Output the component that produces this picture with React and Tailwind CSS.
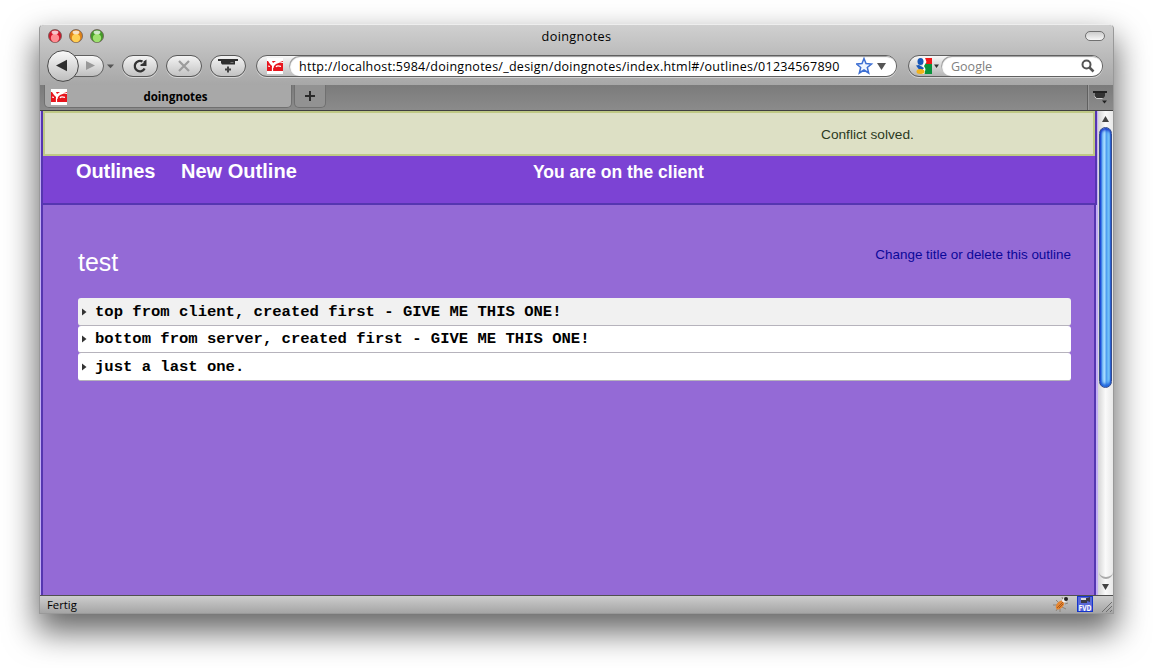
import React from "react";

function Ball({ x, c, d }) {
  return (
    <g>
      <circle cx={x} cy="7" r="6.5" fill={d} stroke="#6b5a55" strokeWidth=".8" />
      <circle cx={x} cy="9" r="4.2" fill={c} />
      <ellipse cx={x} cy="3.4" rx="3.4" ry="1.8" fill="#fff" opacity=".75" />
    </g>
  );
}

function Favicon() {
  return (
    <svg width="16" height="16" viewBox="0 0 16 16" className="shrink-0">
      <rect width="16" height="16" fill="#fff" />
      <rect y="3" width="16" height="10" fill="#e8141c" />
      <path d="M1 3h4l1 2 3-2h4l3 1v1l-3-.5-4 1.500-2 2-.5 2H5V8L3 6z" fill="#fff" />
      <path d="M9 9c1-2 3.500-1 5-.500M5.500 9v4M1 8l2 .500" fill="none" stroke="#fff" strokeWidth="1.200" />
    </svg>
  );
}

const pill =
  "flex h-[22px] w-9 items-center justify-center rounded-full border border-[#585858] bg-gradient-to-b from-[#f4f4f4] to-[#c3c3c3] shadow-[0_1px_0_#d5d5d5]";

function Toolbar() {
  return (
    <div className="flex h-[41px] items-start">
      <div className="mt-[5px] ml-[7px] h-8 w-[68px]">
        <svg width="72" height="33" viewBox="0 0 72 33">
          <defs>
            <linearGradient id="btn" x1="0" y1="0" x2="0" y2="1">
              <stop offset="0" stopColor="#fafafa" />
              <stop offset="1" stopColor="#bdbdbd" />
            </linearGradient>
          </defs>
          <path d="M20 5.500H46a10.500 10.500 0 0 1 0 21H20z" fill="url(#btn)" stroke="#606060" />
          <circle cx="16" cy="16" r="15.400" fill="url(#btn)" stroke="#484848" />
          <path d="M9 15.500L20 9.700V21.300z" fill="#2f2f2f" />
          <path d="M39 11L48 15.500 39 20z" fill="#999" />
          <path d="M60 14.500h7L63.500 18.300z" fill="#555" />
        </svg>
      </div>
      <div className="mt-[10px] ml-[7px] flex gap-2">
        <div className={pill}>
          <svg width="16" height="16" viewBox="0 0 16 16">
            <path d="M12.600 10.500A5.200 5.200 0 1 1 10.500 3.600" fill="none" stroke="#333" strokeWidth="2.300" />
            <path d="M14.500 1.500V8H8.500V6.500L11.500 5V3.500z" fill="#333" />
          </svg>
        </div>
        <div className={pill}>
          <svg width="12" height="12" viewBox="0 0 12 12">
            <path d="M1 1L11 11M11 1L1 11" stroke="#9c9c9c" strokeWidth="2.200" />
          </svg>
        </div>
        <div className={pill}>
          <svg width="20" height="16" viewBox="0 0 20 16">
            <path d="M0 1h20v2h-3v3.500H4L3 5V3H0z" fill="#2f2f2f" />
            <path d="M10 8.500v6M7 11.500h6" stroke="#444" strokeWidth="2" />
            <path d="M12.500 4.500h3" stroke="#888" strokeWidth=".8" />
          </svg>
        </div>
      </div>
      <div className="mt-[10px] ml-[10px] flex h-[22px] w-[641px] items-center rounded-full border border-[#606060] bg-gradient-to-b from-[#f8f8f8] to-[#bdbdbd] pl-[10px] shadow-[0_1px_0_#d5d5d5]">
        <Favicon />
        <div className="ml-[6px] flex h-5 flex-1 items-center rounded-full bg-white pl-[10px] shadow-[inset_1px_1px_1px_#999]">
          <span className="w-[557px] pt-[2px] font-['Open_Sans',sans-serif] text-[12.5px] leading-[18px] tracking-[0.265px] whitespace-nowrap text-black">
            http://localhost:5984/doingnotes/_design/doingnotes/index.html#/outlines/01234567890
          </span>
          <svg width="32" height="18" viewBox="0 0 32 18" className="shrink-0">
            <path d="M8 1.500L10 6.500 15.500 7 11.300 10.500 12.700 16 8 13 3.300 16 4.700 10.500 .5 7 6 6.500z" fill="#eef5ff" stroke="#3d6fd3" strokeWidth="1.500" />
            <path d="M21 6h9L25.500 13z" fill="#555" />
          </svg>
        </div>
      </div>
      <div className="mt-[10px] ml-[11px] flex h-[22px] w-[195px] items-center rounded-full border border-[#606060] bg-gradient-to-b from-[#f8f8f8] to-[#b5b5b5] pl-[6px] shadow-[0_1px_0_#d5d5d5]">
        <svg width="26" height="18" viewBox="0 0 26 18">
          <path d="M9 6h8v11H9z" fill="#0a923c" />
          <path d="M10 1h7v6h-6z" fill="#f01818" />
          <path d="M8 1h2l1.500 4-2.500 4 1.500 3-1 5H7z" fill="#fff" />
          <ellipse cx="5.500" cy="4.500" rx="3" ry="3.500" fill="#1757b8" />
          <path d="M1 8.500l3-.5 5 3-2 2.500-3-1z" fill="#1757b8" />
          <ellipse cx="5.500" cy="14.500" rx="4" ry="2.500" fill="#f2b31a" />
          <path d="M19 7.500h5L21.500 11z" fill="#333" />
        </svg>
        <div className="flex h-5 flex-1 items-center justify-between rounded-full bg-white pr-[7px] pl-[10px] font-['Open_Sans',sans-serif] text-[12.5px] text-[#808080] shadow-[inset_1px_1px_1px_#999]">
          <span className="pt-[2px]">Google</span>
          <svg width="14" height="14" viewBox="0 0 14 14">
            <circle cx="5.500" cy="5.500" r="4" fill="none" stroke="#555" strokeWidth="2" />
            <path d="M8.500 8.500L12.500 12.500" stroke="#555" strokeWidth="2.500" />
          </svg>
        </div>
      </div>
    </div>
  );
}

function TabStrip() {
  return (
    <div className="flex h-[26px] justify-between border-b border-[#404040] bg-gradient-to-b from-[#7b7b7b] to-[#8b8b8b]">
      <div className="flex">
        <div className="ml-1 flex h-[23px] w-[248px] items-center rounded-b-[5px] border border-t-0 border-[#707070] bg-[#a8a8a8] pt-[2px] pl-[6px]">
          <Favicon />
          <span className="flex-1 pr-[7px] text-center font-['Open_Sans',sans-serif] text-[11.5px] font-bold text-black">doingnotes</span>
        </div>
        <div className="ml-[2px] flex h-[23px] w-8 items-center justify-center rounded-b-[5px] border border-t-0 border-[#707070] bg-[#929292]">
          <svg width="10" height="10"><path d="M5 0v10M0 5h10" stroke="#2a2a2a" strokeWidth="2" /></svg>
        </div>
      </div>
      <div className="flex w-[26px] items-center justify-center border-l border-[#606060] shadow-[inset_1px_0_0_#999]">
        <svg width="15" height="13" viewBox="0 0 15 13">
          <path d="M0 1h14" stroke="#222" strokeWidth="2" />
          <path d="M2 2h10v3l-1.500 2h-7L2 5z" fill="#333" />
          <path d="M1.500 5.500l2 2h6" fill="none" stroke="#ccc" />
          <path d="M9 9.500h5L11.500 12.500z" fill="#222" />
        </svg>
      </div>
    </div>
  );
}

const notes = [
  { text: "top from client, created first - GIVE ME THIS ONE!", cls: "h-[27px] bg-[#f1f1f1]" },
  { text: "bottom from server, created first - GIVE ME THIS ONE!", cls: "h-[26px] bg-white" },
  { text: "just a last one.", cls: "h-[27px] bg-white" },
];

function Page() {
  return (
    <div className="flex h-[484px] w-[1058px] flex-col bg-[#c3aef5] pl-px font-['Liberation_Sans',sans-serif]">
      <div className="h-[94px] w-[1056px] border-x-2 border-b-2 border-[#5536b0] bg-[#7c43d4]">
        <div className="flex h-[45px] items-center border-2 border-[#bfc985] bg-[#dde0c5] pt-[3px] pl-[776px] text-[13.7px] text-[#2b3a1e]">
          <span>Conflict solved.</span>
        </div>
        <div className="flex h-[31px] items-baseline pt-px pl-[33px] font-bold text-white">
          <span className="w-[105px] text-[20px] leading-7 tracking-[-0.1px]">Outlines</span>
          <span className="w-[352px] text-[20px] leading-7 tracking-[0.02px]">New Outline</span>
          <span className="text-[17.5px] leading-7">You are on the client</span>
        </div>
      </div>
      <div className="w-[1055px] flex-1 border-x-2 border-[#5536b0] bg-[#946ad6] pt-[36px] pr-[23px] pl-[35px]">
        <div className="flex h-[57px] justify-between">
          <h1 className="mt-[5px] text-[25px] leading-[32px] text-white">test</h1>
          <span className="mt-[4px] text-[13.45px] leading-5 text-[#0b0899]">Change title or delete this outline</span>
        </div>
        <ul>
          {notes.map((n) => (
            <li key={n.text} className={"box-content flex items-center rounded-[3px] border-b border-[#b6b3bc] " + n.cls}>
              <svg width="17" height="10" className="shrink-0"><path d="M4 1.500l4.500 3.500L4 8.500z" fill="#333" /></svg>
              <span className="font-['Liberation_Mono',monospace] text-[15.55px] leading-6 font-bold whitespace-nowrap text-black">{n.text}</span>
            </li>
          ))}
        </ul>
      </div>
    </div>
  );
}

function Scrollbar() {
  return (
    <div className="flex w-[15px] flex-col items-center bg-gradient-to-r from-[#d5d5d5] via-[#fafafa] to-[#e8e8e8]">
      <svg width="15" height="16"><path d="M4 11h7L7.500 5z" fill="#444" /></svg>
      <div className="h-[261px] w-[13px] rounded-full border border-[#334a8c] bg-[linear-gradient(90deg,#1539d5,#71b8f6_20%,#a9dcff_40%,#4c9cf0_60%,#8bdcff_85%,#2260c0)] shadow-[inset_0_2px_3px_#1634c8,inset_0_-3px_3px_#2068dd]" />
      <div className="h-[191px] w-[14px] rounded-b-full border-b-2 border-[#aaa]" />
      <svg width="15" height="16"><path d="M4 5h7L7.500 11z" fill="#444" /></svg>
    </div>
  );
}

function StatusBar() {
  return (
    <div className="flex h-[18px] items-center border-t border-[#505050] bg-gradient-to-b from-[#cdcdcd] to-[#a5a5a5] pl-[7px] font-['Open_Sans',sans-serif] text-[11.3px] text-black">
      <span className="flex-1 pt-px">Fertig</span>
      <svg width="60" height="17" viewBox="0 0 60 17">
        <path d="M3 4l3 3M0 9h4M3 15l2-3M9 1l1 3M15 7l-3 1M13 13l-4-2M7 16v-3" stroke="#8c8378" />
        <ellipse cx="7" cy="9" rx="3.200" ry="5.300" transform="rotate(42 7 9)" fill="#e58632" />
        <path d="M4 12l6-6M6 12l4-4" stroke="#9a4b13" strokeWidth=".8" />
        <circle cx="11" cy="4.500" r="2" fill="#eee" />
        <circle cx="13" cy="3" r="2" fill="#222" />
        <rect x="24.500" y=".500" width="15" height="15" fill="#5a68d8" stroke="#1535cb" />
        <path d="M28 2h6l3-1v5l-3-1v2h-6z" fill="#3a3a44" /><path d="M28 2h5v2h-5z" fill="#ddd" />
        <text x="25.500" y="14.500" textLength="13" lengthAdjust="spacingAndGlyphs" fontSize="8.500" fontWeight="bold" fill="#fff" fontFamily="Open Sans, sans-serif">FVD</text>
        <path d="M49 16L59 6M53 16l6-6M57 16l2-2" stroke="#6f6f6f" />
      </svg>
    </div>
  );
}

export default function App() {
  return (
    <div className="h-[668px] w-[1153px] overflow-hidden bg-white pt-6 pl-[39px]">
      <div className="h-[590px] w-[1075px] overflow-hidden rounded-t-[5px] border border-[#999] border-t-[#eee] bg-[#aaa] shadow-[0_16px_32px_2px_rgba(0,0,0,0.6)]">
        <div className="h-[60px] bg-gradient-to-b from-[#d0d0d0] to-[#a7a7a7]">
          <div className="flex h-[20px] items-start justify-between pt-[4px] pr-2 pl-2">
            <svg width="60" height="15">
              <Ball x={7} c="#ff8d92" d="#d3162a" />
              <Ball x={28} c="#ffcf55" d="#e08316" />
              <Ball x={49} c="#9fe070" d="#449b28" />
            </svg>
            <span className="font-['Open_Sans',sans-serif] text-[12.7px] leading-[15px] tracking-[0.35px] text-black">doingnotes</span>
            <div className="flex w-[60px] justify-end pt-[2px]">
              <div className="h-[10px] w-5 rounded-full border border-[#707070] bg-gradient-to-b from-[#ccc] to-[#f7f7f7]" />
            </div>
          </div>
          <Toolbar />
        </div>
        <TabStrip />
        <div className="flex h-[484px]">
          <Page />
          <Scrollbar />
        </div>
        <StatusBar />
      </div>
    </div>
  );
}
